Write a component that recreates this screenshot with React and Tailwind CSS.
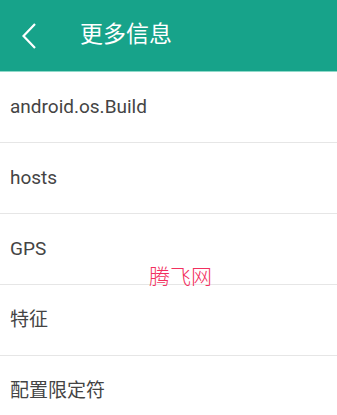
const items = ['android.os.Build', 'hosts', 'GPS', '特征', '配置限定符'];

export default function App() {
  return (
    <div className="relative w-[337px] h-[415px] overflow-hidden bg-white" style={{ fontFamily: 'Roboto, "Noto Sans CJK SC", sans-serif' }}>
      {/* header */}
      <div className="h-[72px] bg-[#17a38a] flex items-center border-b border-[#8fd9c9]">
        <div className="w-[80px] flex items-center pl-[22px]">
          <svg width="14" height="26" viewBox="0 0 14 26" fill="none">
            <path d="M13 1 L1.5 13 L13 25" stroke="white" strokeWidth="2.2" />
          </svg>
        </div>
        <span className="text-white text-[23px]">更多信息</span>
      </div>
      {/* list */}
      <ul>
        {items.map((it, i) => (
          <li
            key={it}
            className={`h-[71px] flex items-center pl-[10px] text-[19px] text-[#444444] ${i < items.length - 1 ? 'border-b border-[#e6e6e6]' : ''}`}
          >
            {it}
          </li>
        ))}
      </ul>
      {/* watermark */}
      <div className="absolute left-[149px] top-[267px] text-[21px] font-light text-[#f2305e] leading-none">腾飞网</div>
    </div>
  );
}
